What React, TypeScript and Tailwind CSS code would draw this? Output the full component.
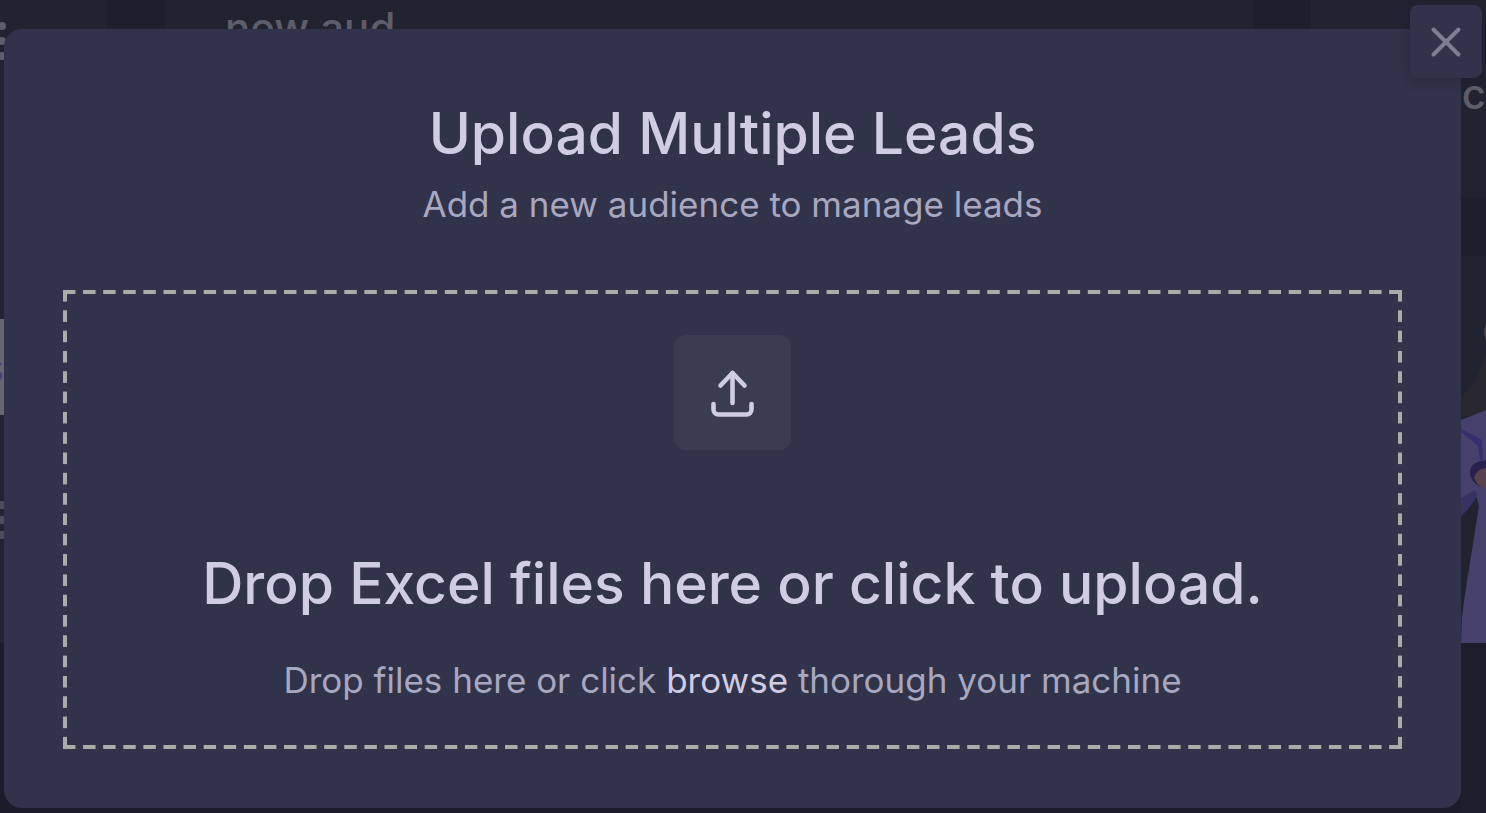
import React from 'react';

const HorizontalDashes = () => (
  <div
    aria-hidden="true"
    className="h-1 bg-[linear-gradient(to_right,#aaacaa_12px,transparent_12px)] bg-[length:calc((100%-12px)/66)_4px] bg-repeat-x"
  ></div>
);

const VerticalDashes = () => (
  <div
    aria-hidden="true"
    className="w-1 -my-1 bg-[linear-gradient(to_bottom,#aaacaa_12px,transparent_12px)] bg-[length:4px_calc((100%-12px)/22)] bg-repeat-y"
  ></div>
);

const UploadIcon = () => (
  <svg
    aria-hidden="true"
    className="w-[45px] h-12"
    viewBox="0 0 45 48"
    fill="none"
    stroke="currentColor"
    strokeWidth="4.6"
    strokeLinecap="round"
    strokeLinejoin="round"
  >
    <path d="M22.5 34V4" />
    <path d="M10.5 16.5L22.5 4l12 12.5" />
    <path d="M3.5 35v5.5a5 5 0 0 0 5 5h28a5 5 0 0 0 5-5V35" />
  </svg>
);

const CloseIcon = () => (
  <svg
    aria-hidden="true"
    className="w-8 h-8"
    viewBox="0 0 32 32"
    fill="none"
    stroke="currentColor"
    strokeWidth="4"
    strokeLinecap="round"
  >
    <path d="M3.5 3.5l25 25M28.5 3.5l-25 25" />
  </svg>
);

/* Dimmed page that stays behind the dialog */
const Backdrop = () => (
  <div
    className="h-screen flex overflow-hidden bg-[linear-gradient(to_bottom,#212331_643px,#1b1c2b_643px)] text-[#5d5d6b]"
    aria-hidden="true"
  >
    {/* Left rail */}
    <div className="w-[7px] shrink-0 overflow-hidden">
      <div className="pt-[22px] space-y-[7px]">
        <div className="size-2 -ml-[2px] rounded-full bg-[#5d5d6b]"></div>
        <div className="size-2 -ml-[2px] rounded-full bg-[#5d5d6b]"></div>
        <div className="size-2 -ml-[2px] rounded-full bg-[#5d5d6b]"></div>
      </div>
      <div className="mt-[259px] h-24 flex items-center justify-end w-1 overflow-hidden bg-[#67676f]">
        <span className="text-[44px] leading-none font-medium text-[#4c3d80]">s</span>
      </div>
      <div className="pt-[86px] space-y-[7px]">
        <div className="h-2 bg-[#4e4e5a]"></div>
        <div className="h-2 bg-[#4e4e5a]"></div>
        <div className="h-2 bg-[#4e4e5a]"></div>
      </div>
    </div>

    {/* Top of the content area */}
    <div className="flex-1 flex h-[60px]">
      <div className="w-[58px] ml-[100px] bg-[#1d1f2d]"></div>
      <div className="flex-1 pl-[60px] text-[42px] leading-[56px] font-medium">new aud</div>
      <div className="w-[58px] mr-[150px] bg-[#1d1f2d]"></div>
    </div>

    {/* Right edge */}
    <div className="w-[25px] shrink-0 flex flex-col overflow-hidden">
      <div className="h-[198px] pt-[66px] flex justify-end text-[42px] leading-[56px] font-medium">oc</div>
      <div className="h-[58px] shrink-0 bg-[#1d1f2d]"></div>
      <svg className="w-[25px] h-[387px] shrink-0" viewBox="0 0 25 387">
        <path d="M0 140Q14 130 25 100V160H0z" fill="#28272f" />
        <path d="M25 68Q21 76 25 84z" fill="#4a4249" />
        <path d="M0 164L25 154V387H0L1 360L6 325L18 250L14 235L0 260z" fill="#46406c" />
        <path d="M0 173Q14 180 21 184L22 204L19 204L17 190Q8 182 0 176z" fill="#352f6e" />
        <path d="M25 204Q9 206 9 216Q9 225 18 230L25 231z" fill="#28204f" />
        <path d="M25 212Q15 213 13 222Q16 231 25 232z" fill="#57434c" />
        <path d="M0 242L14 234L16 240Q8 254 0 260z" fill="#353264" />
      </svg>
      <div className="flex-1 bg-[#1c1e2c]"></div>
    </div>
  </div>
);

export default function App() {
  return (
    <div className="relative font-['Inter','Liberation_Sans',sans-serif]">
      <Backdrop />

      <div className="absolute inset-0 pt-[29px] pl-1 pr-[25px]">
        <div
          role="dialog"
          aria-modal="true"
          aria-labelledby="upload-title"
          className="relative rounded-[18px] bg-[#303349] px-[59px] pt-[69px] pb-[59px]"
        >
          <button
            type="button"
            aria-label="Close"
            className="absolute -top-6 -right-[21px] w-[72px] h-[73px] flex items-center justify-center rounded-lg bg-[#303349] text-[#7d7e94] shadow-[0_4px_12px_rgba(20,22,34,0.2)]"
          >
            <CloseIcon />
          </button>

          <div className="text-center">
            <h3 id="upload-title" className="text-[57px] leading-[72px] font-medium text-[#d0cce4]">
              Upload Multiple Leads
            </h3>
            <p className="text-[35px] leading-[68px] text-[#a8a7c0]">Add a new audience to manage leads</p>
          </div>

          {/* Drop zone */}
          <label htmlFor="lead-files" className="block mt-[52px] cursor-pointer">
            <input id="lead-files" type="file" accept=".xls,.xlsx" multiple className="sr-only" />
            <HorizontalDashes />
            <div className="flex">
              <VerticalDashes />
              <div className="flex-1 flex flex-col items-center text-center pt-[41px] pb-[33px]">
                <div className="w-[117px] h-[115px] flex items-center justify-center rounded-xl bg-[#3a3c52] text-[#d0cce4]">
                  <UploadIcon />
                </div>
                <div className="mt-[98px] text-[57px] leading-[72px] font-medium text-[#d0cce4]">
                  Drop Excel files here or click to upload.
                </div>
                <div className="mt-7 text-[35px] leading-[64px] text-[#a8a7c0]">
                  Drop files here or click <span className="text-[#d0cce4]">browse</span> thorough your machine
                </div>
              </div>
              <VerticalDashes />
            </div>
            <HorizontalDashes />
          </label>
        </div>
      </div>
    </div>
  );
}
